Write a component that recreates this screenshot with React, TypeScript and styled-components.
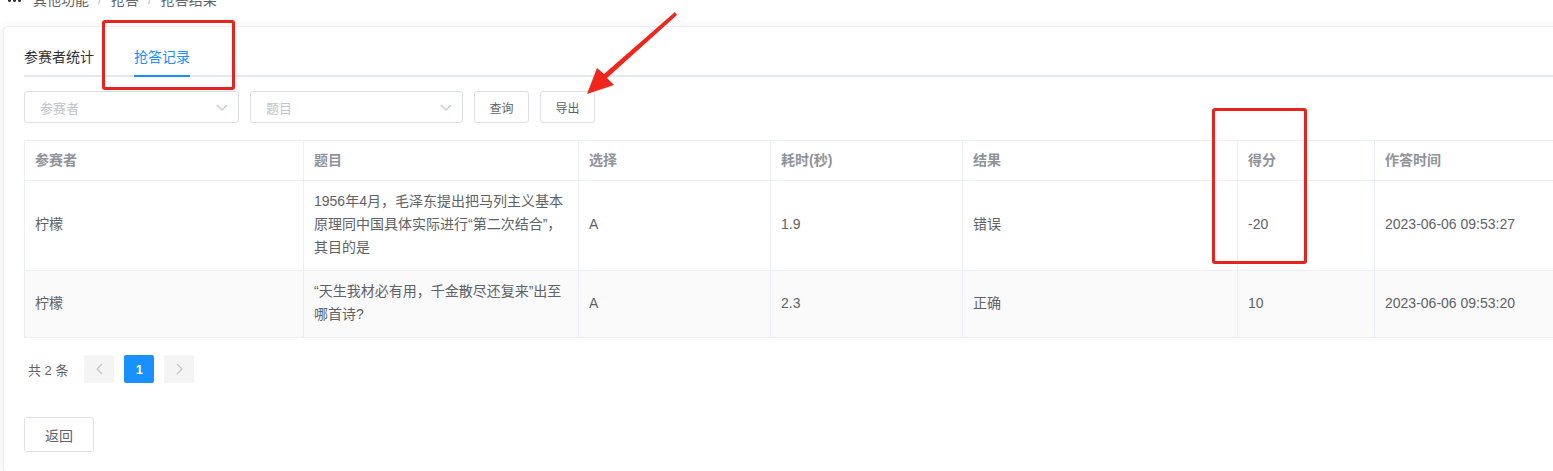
import React from "react";
import styled, { createGlobalStyle, css } from "styled-components";

const GlobalStyle = createGlobalStyle`
  html, body {
    margin: 0;
    padding: 0;
    background: #fff;
    overflow: hidden;
  }
  body {
    font-family: "Liberation Sans", "Noto Sans CJK SC", sans-serif;
    color: #606266;
  }
  * {
    box-sizing: border-box;
  }
`;

const Page = styled.div`
  position: relative;
  width: 1553px;
  height: 471px;
  overflow: hidden;
`;

const Breadcrumb = styled.div`
  display: flex;
  align-items: center;
  height: 20px;
  margin-top: -11px;
  padding-left: 8px;
  font-size: 14px;
  color: #606266;
`;

const Dots = styled.span`
  display: flex;
  gap: 2px;
  margin-right: 12px;
  margin-top: 3px;
  span {
    width: 3px;
    height: 3px;
    border-radius: 50%;
    background: #303133;
  }
`;

const Sep = styled.span`
  margin: 0 9px;
  color: #c0c4cc;
`;

const Card = styled.div`
  margin: 17px 0 0 3px;
  width: 1700px;
  padding: 8px 20px 20px;
  background: #fff;
  border: 1px solid #ebeef5;
  border-radius: 4px;
  box-shadow: 0 2px 12px 0 rgba(0, 0, 0, 0.08);
`;

const TabBar = styled.div`
  display: flex;
  height: 42px;
  border-bottom: 2px solid #e4e7ed;
`;

const Tab = styled.div<{ $active?: boolean }>`
  position: relative;
  height: 40px;
  line-height: 44px;
  padding: 0 20px;
  font-size: 14px;
  color: #303133;
  &:first-child {
    padding-left: 0;
  }
  ${({ $active }) =>
    $active &&
    css`
      color: #1890ff;
      &::after {
        content: "";
        position: absolute;
        left: 20px;
        right: 20px;
        bottom: -2px;
        height: 2px;
        background: #1890ff;
      }
    `}
`;

const FilterRow = styled.div`
  display: flex;
  align-items: center;
  margin-top: 14px;
  gap: 11px;
`;

const Select = styled.div<{ $width: number }>`
  display: flex;
  align-items: center;
  justify-content: space-between;
  width: ${({ $width }) => $width}px;
  height: 32px;
  padding: 0 10px 0 15px;
  border: 1px solid #dcdfe6;
  border-radius: 3px;
  font-size: 13px;
  color: #c0c4cc;
`;

const Button = styled.button<{ $w?: number; $h?: number; $size?: number }>`
  width: ${({ $w }) => $w ?? 55}px;
  height: ${({ $h }) => $h ?? 32}px;
  padding: 0;
  background: #fff;
  border: 1px solid #dcdfe6;
  border-radius: 3px;
  font-family: inherit;
  font-size: ${({ $size }) => $size ?? 12}px;
  color: #606266;
`;

const Table = styled.table`
  margin-top: 17px;
  border-collapse: collapse;
  table-layout: fixed;
  width: 1650px;
  font-size: 14px;
  border: 1px solid #ebeef5;
`;

const Th = styled.th<{ $w: number }>`
  width: ${({ $w }) => $w}px;
  height: 40px;
  padding: 0 10px 3px;
  text-align: left;
  font-weight: 600;
  color: #909399;
  border: 1px solid #ebeef5;
`;

const Tr = styled.tr<{ $striped?: boolean }>`
  background: ${({ $striped }) => ($striped ? "#fafafa" : "#fff")};
`;

const Td = styled.td`
  padding: 9px 10px 11px;
  line-height: 23px;
  color: #606266;
  border: 1px solid #ebeef5;
  vertical-align: middle;
`;

const Pager = styled.div`
  display: flex;
  align-items: center;
  margin-top: 17px;
  gap: 10px;
  font-size: 13px;
`;

const Total = styled.span`
  margin: 0 6px 0 4px;
  font-size: 13px;
  color: #606266;
`;

const PageBtn = styled.div<{ $active?: boolean }>`
  display: flex;
  align-items: center;
  justify-content: center;
  width: 30px;
  height: 28px;
  border-radius: 2px;
  font-weight: 700;
  background: ${({ $active }) => ($active ? "#1890ff" : "#f4f4f5")};
  color: ${({ $active }) => ($active ? "#fff" : "#c0c4cc")};
`;

const Footer = styled.div`
  margin-top: 34px;
`;

const Mark = styled.div<{ $x: number; $y: number; $w: number; $h: number }>`
  position: absolute;
  left: ${({ $x }) => $x}px;
  top: ${({ $y }) => $y}px;
  width: ${({ $w }) => $w}px;
  height: ${({ $h }) => $h}px;
  border: 3px solid #e8231d;
  border-radius: 3px;
  pointer-events: none;
`;

const Arrow = styled.svg`
  position: absolute;
  left: 575px;
  top: 8px;
  pointer-events: none;
`;

const Chevron = ({ dir }: { dir: "down" | "left" | "right" }) => {
  const d =
    dir === "down" ? "M1 1 L6 6 L11 1" : dir === "left" ? "M6 1 L1 6 L6 11" : "M1 1 L6 6 L1 11";
  return (
    <svg
      width={dir === "down" ? 12 : 7}
      height={dir === "down" ? 7 : 12}
      viewBox={dir === "down" ? "0 0 12 7" : "0 0 7 12"}
    >
      <path d={d} fill="none" stroke="#c0c4cc" strokeWidth="1.2" />
    </svg>
  );
};

const columns = [
  { title: "参赛者", w: 279 },
  { title: "题目", w: 275 },
  { title: "选择", w: 192 },
  { title: "耗时(秒)", w: 192 },
  { title: "结果", w: 275 },
  { title: "得分", w: 137 },
  { title: "作答时间", w: 300 },
];

const rows = [
  {
    name: "柠檬",
    question: "1956年4月，毛泽东提出把马列主义基本原理同中国具体实际进行“第二次结合”，其目的是",
    choice: "A",
    time: "1.9",
    result: "错误",
    score: "-20",
    at: "2023-06-06 09:53:27",
  },
  {
    name: "柠檬",
    question: "“天生我材必有用，千金散尽还复来”出至哪首诗?",
    choice: "A",
    time: "2.3",
    result: "正确",
    score: "10",
    at: "2023-06-06 09:53:20",
  },
];

export default function App() {
  return (
    <Page>
      <GlobalStyle />
      <Breadcrumb>
        <Dots>
          <span />
          <span />
          <span />
        </Dots>
        其他功能<Sep>/</Sep>抢答<Sep>/</Sep>抢答结果
      </Breadcrumb>
      <Card>
        <TabBar>
          <Tab>参赛者统计</Tab>
          <Tab $active>抢答记录</Tab>
        </TabBar>
        <FilterRow>
          <Select $width={215}>
            参赛者
            <Chevron dir="down" />
          </Select>
          <Select $width={213}>
            题目
            <Chevron dir="down" />
          </Select>
          <Button>查询</Button>
          <Button>导出</Button>
        </FilterRow>
        <Table>
          <thead>
            <tr>
              {columns.map((c) => (
                <Th key={c.title} $w={c.w}>
                  {c.title}
                </Th>
              ))}
            </tr>
          </thead>
          <tbody>
            {rows.map((r, i) => (
              <Tr key={i} $striped={i % 2 === 1}>
                <Td>{r.name}</Td>
                <Td>{r.question}</Td>
                <Td>{r.choice}</Td>
                <Td>{r.time}</Td>
                <Td>{r.result}</Td>
                <Td>{r.score}</Td>
                <Td>{r.at}</Td>
              </Tr>
            ))}
          </tbody>
        </Table>
        <Pager>
          <Total>共 2 条</Total>
          <PageBtn>
            <Chevron dir="left" />
          </PageBtn>
          <PageBtn $active>1</PageBtn>
          <PageBtn>
            <Chevron dir="right" />
          </PageBtn>
        </Pager>
        <Footer>
          <Button $w={70} $h={35} $size={14}>
            返回
          </Button>
        </Footer>
      </Card>

      <Mark $x={102} $y={20} $w={133} $h={70} />
      <Mark $x={1212} $y={108} $w={95} $h={156} />
      <Arrow width="110" height="95" viewBox="0 0 110 95">
        <polygon points="100,4 102,7 32,70 39,77 12,86 22,60 29,66" fill="#f0261d" />
      </Arrow>
    </Page>
  );
}
